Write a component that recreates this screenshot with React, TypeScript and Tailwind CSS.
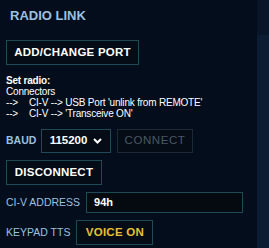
import React from 'react'

const font = { fontFamily: '"Liberation Sans", Arial, sans-serif' }

function Btn({ children, className = '' }: { children: React.ReactNode; className?: string }) {
  return (
    <button
      type="button"
      className={`shrink-0 whitespace-nowrap border border-[#1d4a55] bg-[#050c16] px-0 text-center text-[11.5px] font-bold tracking-[0.02em] ${className}`}
    >
      {children}
    </button>
  )
}

export default function App() {
  return (
    <div className="flex h-[248px] w-[269px] overflow-hidden bg-[#030d1b]" style={font}>
      <div className="flex w-[257px] flex-col px-[6px]">
        <h2 className="mt-[9px] pl-[4px] text-[13px] font-bold leading-[14px] text-[#9cc0e0]">RADIO LINK</h2>

        <Btn className="mt-[17px] h-[25px] w-[133px] text-white">ADD/CHANGE PORT</Btn>

        <div className="mt-[10px] whitespace-nowrap text-[10px] leading-[11px] tracking-[-0.02em] text-white">
          <div className="font-bold">Set radio:</div>
          <div>Connectors</div>
          <div className="flex">
            <span className="w-[23px]">--&gt;</span>
            <span>CI-V --&gt; USB Port 'unlink from REMOTE'</span>
          </div>
          <div className="flex">
            <span className="w-[23px]">--&gt;</span>
            <span>CI-V --&gt; 'Transceive ON'</span>
          </div>
        </div>

        <div className="mt-[10px] flex items-center gap-[6px]">
          <span className="w-[29px] text-[10.5px] font-bold text-[#9cc0e0]">BAUD</span>
          <div className="flex h-[24px] w-[70px] items-center justify-center gap-[6px] border border-[#1d4a55] bg-[#050c16] text-[11.5px] font-bold text-white">
            115200
            <svg width="9" height="6" viewBox="0 0 9 6" fill="none" stroke="white" strokeWidth="2">
              <path d="M1 1l3.5 3.5L8 1" />
            </svg>
          </div>
          <Btn className="h-[24px] w-[76px] border-[#1e2a33] font-normal tracking-[0.05em] text-[#4a5862]">CONNECT</Btn>
        </div>

        <Btn className="mt-[7px] h-[25px] w-[96px] text-white">DISCONNECT</Btn>

        <div className="mt-[7px] flex items-center gap-[6px]">
          <span className="whitespace-nowrap text-[10.5px] text-[#9cc0e0]">CI-V ADDRESS</span>
          <div className="flex h-[21px] w-[157px] items-center border border-[#1d4a55] bg-[#050a10] px-[7px] text-[11px] font-bold text-white">
            94h
          </div>
        </div>

        <div className="mt-[7px] flex items-center gap-[6px]">
          <span className="whitespace-nowrap text-[10.5px] text-[#9cc0e0]">KEYPAD TTS</span>
          <Btn className="h-[25px] w-[77px] text-[#e8c038]">VOICE ON</Btn>
        </div>
      </div>
      <div className="flex flex-1 flex-col bg-[#091528]">
        <div className="h-[35px]" />
        <div className="flex-1 bg-[#0b1c33]" />
      </div>
    </div>
  )
}
